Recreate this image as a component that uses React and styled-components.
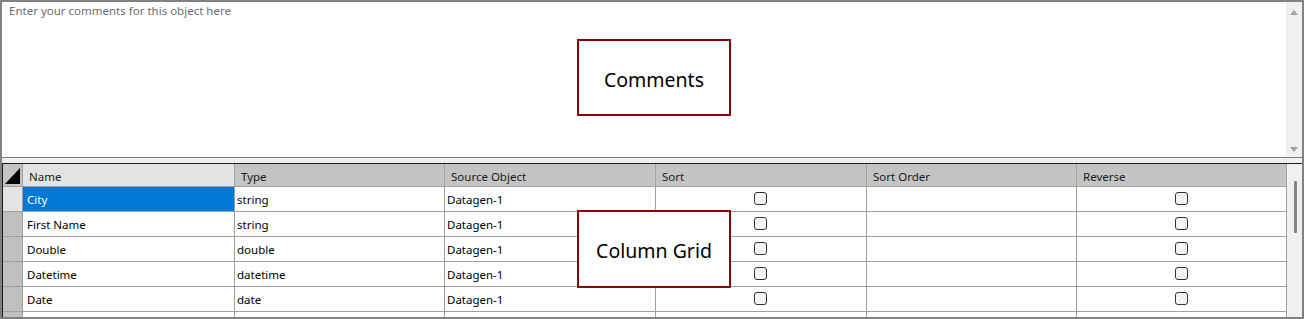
import React from "react";
import styled, { createGlobalStyle } from "styled-components";

const Global = createGlobalStyle`
  html, body { margin: 0; padding: 0; background: #fff; }
  body { font-family: "Noto Sans", "Open Sans", "DejaVu Sans", sans-serif; }
  * { box-sizing: border-box; }
`;

const FONT = `"Noto Sans", "Open Sans", "DejaVu Sans", sans-serif`;

const Frame = styled.div`
  position: relative;
  width: 1304px;
  height: 319px;
  border: 2px solid #828282;
  display: flex;
  flex-direction: column;
  overflow: hidden;
  background: #fff;
  font-family: ${FONT};
`;

const CommentsPane = styled.div`
  height: 156px;
  flex: none;
  display: flex;
  border-bottom: 1px solid #7d7d7d;
  background: #fff;
`;

const CommentsText = styled.div`
  flex: 1;
  padding: 0 7px;
  font-size: 11.5px;
  color: #6d6d6d;
  line-height: 18px;
`;

const VScroll = styled.div`
  width: 16px;
  flex: none;
  background: #f0f0f0;
  display: flex;
  flex-direction: column;
  justify-content: space-between;
  align-items: center;
  padding: 8px 0 5px;
`;

const Arrow = styled.div`
  width: 0;
  height: 0;
  border-left: 4px solid transparent;
  border-right: 4px solid transparent;
  ${(p) =>
    p.$dir === "up"
      ? "border-bottom: 5px solid #a3a3a3;"
      : "border-top: 5px solid #a3a3a3;"}
`;

const Splitter = styled.div`
  height: 5px;
  flex: none;
  background: #f0f0f0;
`;

const GridArea = styled.div`
  flex: 1;
  display: flex;
  border-top: 1px solid #1b1b1b;
  border-left: 1px solid #1b1b1b;
  overflow: hidden;
  min-height: 0;
`;

const Table = styled.div`
  display: grid;
  grid-template-columns: 20px 212px 210px 211px 211px 210px 210px;
  grid-auto-rows: 25px;
  grid-template-rows: 23px;
  align-content: start;
  overflow: hidden;
`;

const Corner = styled.div`
  background: #c4c4c4;
  border-right: 1px solid #a0a0a0;
  border-bottom: 1px solid #a0a0a0;
  display: flex;
  align-items: flex-end;
  justify-content: flex-end;
  padding: 0 2px 2px 0;
`;

const Triangle = styled.div`
  width: 0;
  height: 0;
  border-left: 15px solid transparent;
  border-bottom: 16px solid #000;
`;

const HeadCell = styled.div`
  background: ${(p) => (p.$active ? "#e3e3e3" : "#c4c4c4")};
  border-right: 1px solid #a3a3a3;
  border-bottom: 1px solid #a3a3a3;
  font-size: 11.5px;
  color: #1a1a1a;
  display: flex;
  align-items: center;
  padding: 2px 6px 0;
  white-space: nowrap;
`;

const RowHead = styled.div`
  background: ${(p) => (p.$active ? "#e3e3e3" : "#c0c0c0")};
  border-right: 1px solid #a0a0a0;
  border-bottom: 1px solid #a0a0a0;
`;

const Cell = styled.div`
  background: ${(p) => (p.$selected ? "#0078d7" : "#fff")};
  color: ${(p) => (p.$selected ? "#fff" : "#000")};
  border-right: 1px solid #a0a0a0;
  border-bottom: 1px solid #a0a0a0;
  font-size: 11.5px;
  display: flex;
  align-items: center;
  justify-content: ${(p) => (p.$center ? "center" : "flex-start")};
  padding: 0 ${(p) => (p.$first ? "4px" : "2px")};
  white-space: nowrap;
`;

const Check = styled.div`
  width: 13px;
  height: 13px;
  border: 1px solid #333;
  border-radius: 3px;
  background: #f4f4f4;
  margin: -1px 1px 0 0;
`;

const GridScroll = styled.div`
  width: 15px;
  flex: none;
  background: #f0f0f0;
  display: flex;
  justify-content: center;
  padding-top: 17px;
`;

const Thumb = styled.div`
  width: 3px;
  height: 52px;
  border-radius: 1px;
  background: #858585;
  margin-left: 2px;
`;

const Note = styled.div`
  position: absolute;
  left: 575px;
  top: ${(p) => p.$top}px;
  width: 154px;
  height: ${(p) => p.$h}px;
  border: 2px solid #8b0000;
  background: #fff;
  display: flex;
  align-items: center;
  justify-content: center;
  font-family: ${FONT};
  font-size: 19.5px;
  color: #000;
  padding-top: ${(p) => p.$pt}px;
`;

const columns = ["Name", "Type", "Source Object", "Sort", "Sort Order", "Reverse"];

const rows = [
  ["City", "string"],
  ["First Name", "string"],
  ["Double", "double"],
  ["Datetime", "datetime"],
  ["Date", "date"],
];

export default function App() {
  return (
    <>
      <Global />
      <Frame>
        <CommentsPane>
          <CommentsText>Enter your comments for this object here</CommentsText>
          <VScroll>
            <Arrow $dir="up" />
            <Arrow $dir="down" />
          </VScroll>
        </CommentsPane>
        <Splitter />
        <GridArea>
          <Table>
            <Corner>
              <Triangle />
            </Corner>
            {columns.map((c, i) => (
              <HeadCell key={c} $active={i === 0}>
                {c}
              </HeadCell>
            ))}
            {rows.map(([name, type], r) => (
              <React.Fragment key={name}>
                <RowHead $active={r === 0} />
                <Cell $first $selected={r === 0}>{name}</Cell>
                <Cell>{type}</Cell>
                <Cell>Datagen-1</Cell>
                <Cell $center>
                  <Check />
                </Cell>
                <Cell />
                <Cell $center>
                  <Check />
                </Cell>
              </React.Fragment>
            ))}
            <RowHead />
            <Cell />
            <Cell />
            <Cell />
            <Cell />
            <Cell />
            <Cell />
          </Table>
          <GridScroll>
            <Thumb />
          </GridScroll>
        </GridArea>
        <Note $top={37} $h={77} $pt={4}>Comments</Note>
        <Note $top={208} $h={78} $pt={2}>Column Grid</Note>
      </Frame>
    </>
  );
}
